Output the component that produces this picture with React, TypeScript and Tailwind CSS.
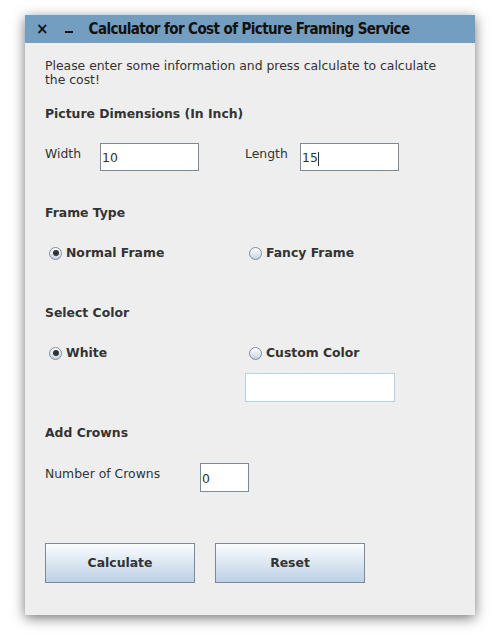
import React from 'react'

const body = { fontFamily: '"DejaVu Sans", Verdana, sans-serif' }

function Radio({ label, checked }: { label: string; checked?: boolean }) {
  return (
    <div className="flex items-center h-[14px]">
      <span className="ml-[4px] w-[13px] h-[13px] rounded-full border border-[#7f8c99] bg-gradient-to-b from-white to-[#c3d3e3] flex items-center justify-center">
        {checked && <span className="w-[6px] h-[6px] rounded-full bg-[#333]" />}
      </span>
      <span className="ml-[4px] text-[12.4px] font-bold text-[#333] leading-[14px]">{label}</span>
    </div>
  )
}

function Field({ value, caret, className }: { value: string; caret?: boolean; className: string }) {
  return (
    <div className={`bg-white border border-[#7a8a99] flex items-center pl-[1px] pt-[3px] text-[12.4px] text-[#333] ${className}`}>
      <span>{value}</span>
      {caret && <span className="w-px h-[14px] bg-[#333]" />}
    </div>
  )
}

export default function App() {
  return (
    <div className="w-[503px] h-[637px] bg-white pt-[15px] pl-[25px]">
      <div className="w-[450px] h-[600px] flex flex-col bg-[#eeeeee] shadow-[0_3px_12px_rgba(0,0,0,0.55)]">
        <div className="h-[28px] bg-[#739ebf] flex items-center text-[#111] whitespace-nowrap">
          <span className="ml-[11px] text-[15px] font-bold leading-none" style={body}>×</span>
          <span className="ml-[16px] w-[8px] h-[2px] bg-[#111] mt-[6px]" />
          <span
            className="ml-[16px] text-[15px] font-bold tracking-[-0.6px]"
            style={{ fontFamily: '"DejaVu Sans Condensed", "Liberation Sans Narrow", sans-serif' }}
          >
            Calculator for Cost of Picture Framing Service
          </span>
        </div>

        <div className="flex flex-col pl-[20px] text-[#333]" style={body}>
          <p className="mt-[16px] text-[12.4px] leading-[14px] w-[405px]">
            Please enter some information and press calculate to calculate the cost!
          </p>

          <h2 className="mt-[20px] text-[12.4px] font-bold leading-[14px]">Picture Dimensions (In Inch)</h2>

          <div className="mt-[22px] flex h-[28px]">
            <span className="w-[55px] mt-[4px] text-[12.4px] leading-[14px]">Width</span>
            <Field value="10" className="w-[99px] h-[28px]" />
            <span className="ml-[46px] w-[55px] mt-[4px] text-[12.4px] leading-[14px]">Length</span>
            <Field value="15" caret className="w-[99px] h-[28px]" />
          </div>

          <h2 className="mt-[35px] text-[12.4px] font-bold leading-[14px]">Frame Type</h2>

          <div className="mt-[26px] grid grid-cols-[200px_200px]">
            <Radio label="Normal Frame" checked />
            <Radio label="Fancy Frame" />
          </div>

          <h2 className="mt-[46px] text-[12.4px] font-bold leading-[14px]">Select Color</h2>

          <div className="mt-[26px] grid grid-cols-[200px_200px]">
            <Radio label="White" checked />
            <Radio label="Custom Color" />
          </div>

          <div className="mt-[13px] ml-[200px] w-[150px] h-[29px] bg-white border border-[#b8cfe5]" />

          <h2 className="mt-[24px] text-[12.4px] font-bold leading-[14px]">Add Crowns</h2>

          <div className="mt-[23px] flex h-[29px]">
            <span className="w-[155px] mt-[4px] text-[12.4px] leading-[14px]">Number of Crowns</span>
            <Field value="0" className="w-[49px] h-[29px]" />
          </div>

          <div className="mt-[51px] flex gap-[20px]">
            {['Calculate', 'Reset'].map((t) => (
              <button
                key={t}
                className="w-[150px] h-[40px] border border-[#7a8a99] bg-gradient-to-b from-[#fbfdff] to-[#bcd0e6] text-[12.4px] font-bold text-[#333]"
              >
                {t}
              </button>
            ))}
          </div>
        </div>
      </div>
    </div>
  )
}
